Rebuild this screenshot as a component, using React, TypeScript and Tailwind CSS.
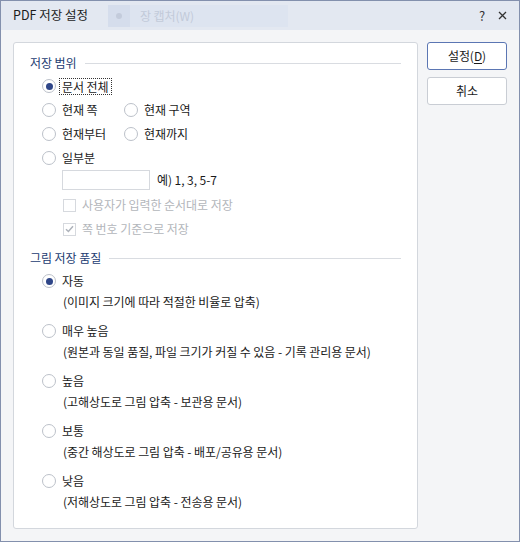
import React from "react";

const FONT = { fontFamily: '"Noto Sans CJK KR", "Noto Sans", sans-serif' };

function Radio({ checked = false }: { checked?: boolean }) {
  return (
    <span className="w-[14px] h-[14px] rounded-full border border-[#bcc1c9] bg-white flex items-center justify-center shrink-0">
      {checked && <span className="w-[7px] h-[7px] rounded-full bg-[#2f4688]" />}
    </span>
  );
}

function RadioItem({ label, checked = false, focus = false, w }: { label: string; checked?: boolean; focus?: boolean; w?: string }) {
  return (
    <div className={`flex items-center h-[24px] ${w ?? ""}`}>
      <Radio checked={checked} />
      {focus ? (
        <span className="ml-[3px] px-[2px] border border-dotted border-[#333] leading-[15px] text-[#1a1a1a]">{label}</span>
      ) : (
        <span className="ml-[6px] text-[#1a1a1a]">{label}</span>
      )}
    </div>
  );
}

function Check({ label, checked = false }: { label: string; checked?: boolean }) {
  return (
    <div className="flex items-center h-[24px] pl-[21px]">
      <span className="w-[13px] h-[13px] border border-[#d6d9de] bg-white flex items-center justify-center shrink-0">
        {checked && (
          <svg width="9" height="8" viewBox="0 0 9 8">
            <path d="M1 4.2 L3.4 6.5 L8 1.2" stroke="#adb2ba" strokeWidth="1.5" fill="none" />
          </svg>
        )}
      </span>
      <span className="ml-[6px] text-[#b3b6bb]">{label}</span>
    </div>
  );
}

function Header({ label }: { label: string }) {
  return (
    <div className="flex items-center h-[22px]">
      <span className="text-[#233c72]">{label}</span>
      <div className="flex-1 h-px bg-[#d9dce1] ml-[8px] mt-[1px]" />
    </div>
  );
}

function Quality({ label, desc, checked = false }: { label: string; desc: string; checked?: boolean }) {
  return (
    <div className="flex flex-col">
      <RadioItem label={label} checked={checked} />
      <div className="h-[18px] flex items-center pl-[21px] text-[#1a1a1a]">{desc}</div>
    </div>
  );
}

export default function App() {
  return (
    <div style={FONT} className="w-[520px] h-[542px] border border-[#8390ad] bg-[#f4f5f7] flex flex-col text-[12px] tracking-[-0.06px] overflow-hidden">
      <div className="h-[29px] bg-[#e3e8f1] flex items-center relative shrink-0">
        <span className="ml-[12px] text-[#1c1c1c] text-[12.5px] tracking-normal">PDF 저장 설정</span>
        <div className="absolute left-[107px] top-[4px] w-[180px] h-[22px] bg-[#dde4f0] flex items-center">
          <span className="w-[22px] h-[22px] bg-[#d5ddec] flex items-center justify-center">
            <span className="w-[6px] h-[6px] rounded-full bg-[#c3cbdb]" />
          </span>
          <span className="ml-[10px] text-[#c2cad9]">장 캡처(W)</span>
        </div>
        <div className="ml-auto flex items-center gap-[13px] mr-[12px] text-[#333]">
          <span className="text-[13px]">?</span>
          <svg width="9" height="9" viewBox="0 0 9 9">
            <path d="M1 1 L8 8 M8 1 L1 8" stroke="#333" strokeWidth="1.3" />
          </svg>
        </div>
      </div>
      <div className="flex-1 flex px-[12px] pt-[12px] pb-[12px] gap-[9px]">
        <div className="w-[405px] bg-white border border-[#d3d7dd] rounded-[3px] px-[16px] pt-[9px]">
          <Header label="저장 범위" />
          <div className="pl-[12px]">
            <RadioItem label="문서 전체" checked focus />
            <div className="flex">
              <RadioItem label="현재 쪽" w="w-[82px]" />
              <RadioItem label="현재 구역" />
            </div>
            <div className="flex">
              <RadioItem label="현재부터" w="w-[82px]" />
              <RadioItem label="현재까지" />
            </div>
            <RadioItem label="일부분" />
            <div className="flex items-center h-[20px] pl-[20px]">
              <div className="w-[88px] h-[20px] border border-[#d6d9de] bg-white" />
              <span className="ml-[7px] text-[#1a1a1a]">예) 1, 3, 5-7</span>
            </div>
            <div className="mt-[3px]">
              <Check label="사용자가 입력한 순서대로 저장" />
              <Check label="쪽 번호 기준으로 저장" checked />
            </div>
          </div>
          <div className="mt-[6px]">
            <Header label="그림 저장 품질" />
          </div>
          <div className="pl-[12px] flex flex-col gap-[8px]">
            <Quality label="자동" desc="(이미지 크기에 따라 적절한 비율로 압축)" checked />
            <Quality label="매우 높음" desc="(원본과 동일 품질, 파일 크기가 커질 수 있음 - 기록 관리용 문서)" />
            <Quality label="높음" desc="(고해상도로 그림 압축 - 보관용 문서)" />
            <Quality label="보통" desc="(중간 해상도로 그림 압축 - 배포/공유용 문서)" />
            <Quality label="낮음" desc="(저해상도로 그림 압축 - 전송용 문서)" />
          </div>
        </div>
        <div className="flex flex-col gap-[7px]">
          <button className="w-[80px] h-[28px] border border-[#5b76b3] rounded-[3px] bg-white text-[#1a1a1a] flex items-center justify-center">
            설정(<span className="underline underline-offset-2">D</span>)
          </button>
          <button className="w-[80px] h-[28px] border border-[#c9cdd4] rounded-[3px] bg-white text-[#1a1a1a] flex items-center justify-center">
            취소
          </button>
        </div>
      </div>
    </div>
  );
}
